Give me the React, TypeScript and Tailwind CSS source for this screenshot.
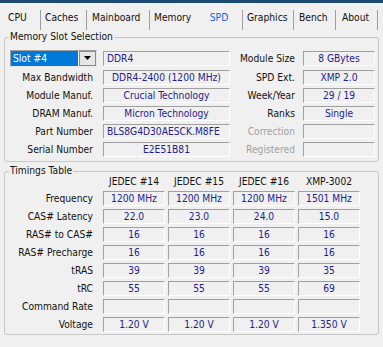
import React from "react";

const fieldCls =
  "h-[15px] border border-t-[#a0a0a0] border-l-[#a0a0a0] border-r-white border-b-white text-[#1e1e8c] leading-[13px] whitespace-nowrap overflow-hidden";

function Field({
  children,
  w,
  left,
}: {
  children?: React.ReactNode;
  w: string;
  left?: boolean;
}) {
  return (
    <div className={`${fieldCls} ${w} ${left ? "text-left pl-[3px]" : "text-center"}`}>
      {children}
    </div>
  );
}

function Label({
  children,
  w,
  grey,
}: {
  children: React.ReactNode;
  w: string;
  grey?: boolean;
}) {
  return (
    <div
      className={`${w} shrink-0 text-right whitespace-nowrap leading-[15px] ${
        grey ? "text-[#a0a0a0]" : "text-[#111111]"
      }`}
    >
      {children}
    </div>
  );
}

const tabs: { name: string; cls: string }[] = [
  { name: "CPU", cls: "w-[41px] pl-[8px] border-r border-[#a0a0a0]" },
  { name: "Caches", cls: "w-[46px] pl-[4px] border-r border-[#a0a0a0]" },
  { name: "Mainboard", cls: "w-[63px] pl-[5px] border-r border-[#a0a0a0]" },
  { name: "Memory", cls: "w-[46px] pl-[4px]" },
  { name: "SPD", cls: "w-[47px] text-center border-r border-[#a0a0a0] text-[#0a66dc]" },
  { name: "Graphics", cls: "w-[51px] pl-[4px] border-r border-[#a0a0a0]" },
  { name: "Bench", cls: "w-[42px] pl-[5px] border-r border-[#a0a0a0]" },
  { name: "About", cls: "w-[42px] pl-[6px] border-r border-[#a0a0a0]" },
];

const topRows: [string, string, boolean, string, string, boolean][] = [
  ["Max Bandwidth", "DDR4-2400 (1200 MHz)", false, "SPD Ext.", "XMP 2.0", false],
  ["Module Manuf.", "Crucial Technology", false, "Week/Year", "29 / 19", false],
  ["DRAM Manuf.", "Micron Technology", false, "Ranks", "Single", false],
  ["Part Number", "BLS8G4D30AESCK.M8FE", true, "Correction", "", true],
  ["Serial Number", "E2E51B81", false, "Registered", "", true],
];

const timingRows: [string, string[]][] = [
  ["Frequency", ["1200 MHz", "1200 MHz", "1200 MHz", "1501 MHz"]],
  ["CAS# Latency", ["22.0", "23.0", "24.0", "15.0"]],
  ["RAS# to CAS#", ["16", "16", "16", "16"]],
  ["RAS# Precharge", ["16", "16", "16", "16"]],
  ["tRAS", ["39", "39", "39", "35"]],
  ["tRC", ["55", "55", "55", "69"]],
  ["Command Rate", ["", "", "", ""]],
  ["Voltage", ["1.20 V", "1.20 V", "1.20 V", "1.350 V"]],
];

const headers = ["JEDEC #14", "JEDEC #15", "JEDEC #16", "XMP-3002"];

export default function App() {
  return (
    <div className="w-[383px] h-[347px] overflow-hidden bg-[#f0f0f0] font-['DejaVu_Sans_Condensed','DejaVu_Sans',sans-serif] font-stretch-condensed text-[10.2px] text-[#111111]">
      <div className="h-[3px] bg-[#1c4a72]" />
      <div className="h-[27px] flex items-start">
        {tabs.map((t) => (
          <div key={t.name} className={`mt-[7px] h-[20px] leading-[16px] whitespace-nowrap ${t.cls}`}>
            {t.name}
          </div>
        ))}
      </div>

      <fieldset className="ml-[4px] w-[375px] border border-[#c6c6c6] rounded-[3px] pb-[4px]">
        <legend className="ml-[4px] px-[1px] leading-[14px]">Memory Slot Selection</legend>
        <div className="flex flex-col pt-[5px] gap-[3px]">
          <div className="flex items-center h-[18px]">
            <div className="w-[92px] shrink-0 flex">
              <div className="ml-[5px] w-[87px] h-[17px] flex border border-t-[#a0a0a0] border-l-[#a0a0a0] border-r-[#e8e8e8] border-b-[#e8e8e8] bg-white">
                <div className="w-[67px] bg-[#0078d7] text-white leading-[15px] pl-[2px]">Slot #4</div>
                <div className="flex-1 ml-[1px] border border-[#8a8a8a] bg-[#e6e6e6] flex items-center justify-center">
                  <svg width="7" height="4" viewBox="0 0 7 4">
                    <path d="M0 0H7L3.5 4Z" fill="#000" />
                  </svg>
                </div>
              </div>
            </div>
            <div className="ml-[6px]">
              <Field w="w-[127px]" left>
                DDR4
              </Field>
            </div>
            <Label w="w-[67px] pr-[2px]">Module Size</Label>
            <div className="ml-[6px]">
              <Field w="w-[72px]">8 GBytes</Field>
            </div>
          </div>
          {topRows.map(([l, v, left, l2, v2, grey]) => (
            <div key={l} className="flex items-center h-[15px]">
              <Label w="w-[92px] pr-[4px]">{l}</Label>
              <div className="ml-[6px]">
                <Field w="w-[127px]" left={left}>
                  {v}
                </Field>
              </div>
              <Label w="w-[67px] pr-[2px]" grey={grey}>
                {l2}
              </Label>
              <div className="ml-[6px]">
                <Field w="w-[72px]">{v2}</Field>
              </div>
            </div>
          ))}
        </div>
      </fieldset>

      <fieldset className="ml-[4px] mt-[2px] w-[375px] border border-[#c6c6c6] rounded-[3px] pb-[2px]">
        <legend className="ml-[4px] px-[1px] leading-[14px]">Timings Table</legend>
        <div className="-mt-[3px] h-[14px] flex items-center leading-[14px]">
          <div className="w-[98px] shrink-0" />
          {headers.map((h, i) => (
            <div key={h} className={`w-[62px] text-center whitespace-nowrap ${i > 0 ? "ml-[3px]" : ""}`}>
              {h}
            </div>
          ))}
        </div>
        <div className="mt-[2px] flex flex-col gap-[3px]">
          {timingRows.map(([l, vals]) => (
            <div key={l} className="flex items-center h-[15px]">
              <Label w="w-[92px] pr-[4px]">{l}</Label>
              <div className="ml-[6px] flex gap-[3px]">
                {vals.map((v, i) => (
                  <Field key={i} w="w-[62px]">
                    {v}
                  </Field>
                ))}
              </div>
            </div>
          ))}
        </div>
      </fieldset>
    </div>
  );
}
